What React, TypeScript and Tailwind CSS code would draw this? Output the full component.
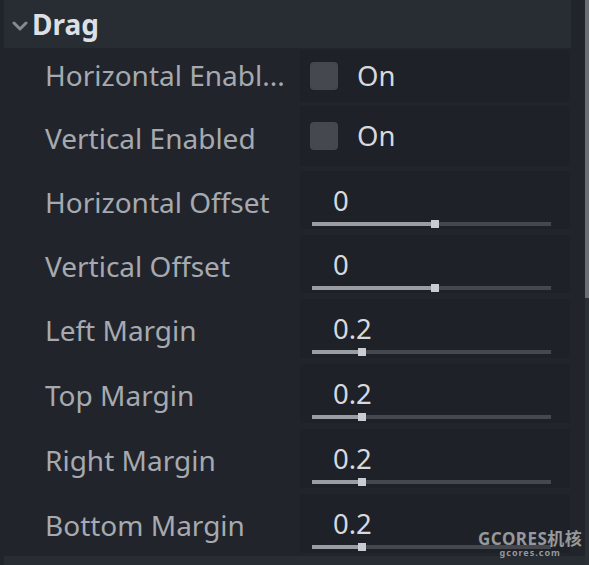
const font = { fontFamily: '"Noto Sans", "Noto Sans CJK SC", sans-serif' };

type Row =
  | { label: string; kind: 'check'; height: string }
  | { label: string; kind: 'slider'; value: string; ratio: number; height: string };

const rows: Row[] = [
  { label: 'Horizontal Enabl...', kind: 'check', height: 'h-[56px]' },
  { label: 'Vertical Enabled', kind: 'check', height: 'h-[64px]' },
  { label: 'Horizontal Offset', kind: 'slider', value: '0', ratio: 0.515, height: 'h-[64px]' },
  { label: 'Vertical Offset', kind: 'slider', value: '0', ratio: 0.515, height: 'h-[64px]' },
  { label: 'Left Margin', kind: 'slider', value: '0.2', ratio: 0.21, height: 'h-[65px]' },
  { label: 'Top Margin', kind: 'slider', value: '0.2', ratio: 0.21, height: 'h-[65px]' },
  { label: 'Right Margin', kind: 'slider', value: '0.2', ratio: 0.21, height: 'h-[65px]' },
  { label: 'Bottom Margin', kind: 'slider', value: '0.2', ratio: 0.21, height: 'h-[65px]' },
];

function Slider({ ratio }: { ratio: number }) {
  return (
    <div className="relative ml-[12px] h-[4px] w-[239px] bg-[#45484e]">
      <div className="h-full bg-[#9a9da2]" style={{ width: `${ratio * 100}%` }} />
      <div
        className="absolute top-[-2px] h-[8px] w-[8px] -translate-x-1/2 bg-[#c9ccd0]"
        style={{ left: `${ratio * 100}%` }}
      />
    </div>
  );
}

export default function App() {
  return (
    <div className="flex h-[565px] w-[589px] overflow-hidden bg-[#21252b]" style={font}>
      <div className="relative flex w-[585px] flex-col">
        <div className="ml-[4px] flex h-[48px] w-[567px] items-center bg-[#282c33]">
          <svg width="16" height="10" viewBox="0 0 16 10" className="ml-[8px] mt-[4px]">
            <path d="M2 2 L8 8 L14 2" fill="none" stroke="#868a90" strokeWidth="3" strokeLinecap="round" strokeLinejoin="round" />
          </svg>
          <span className="ml-[4px] text-[28px] font-bold leading-none text-[#dcdfe3]">Drag</span>
        </div>

        {rows.map((row, i) => (
          <div key={row.label} className={`flex ${row.height}`}>
            <div
              className={`flex w-[300px] items-center whitespace-nowrap pl-[45px] text-[28px] leading-[30px] text-[#a6aab0] ${i > 0 ? 'pt-[3px]' : 'pb-[3px]'}`}
            >
              {row.label}
            </div>
            {row.kind === 'check' ? (
              <div className="my-[2px] flex w-[270px] items-center bg-[#1e2127]">
                <div className="ml-[10px] h-[28px] w-[28px] rounded-[4px] bg-[#45484e]" />
                <span className="ml-[19px] text-[27.5px] leading-[30px] text-[#d6d9dd]">On</span>
              </div>
            ) : (
              <div className="my-[3px] flex w-[270px] flex-col bg-[#1e2127]">
                <span className="ml-[33px] mt-[15px] text-[27.5px] leading-[30px] text-[#d6d9dd]">
                  {row.value}
                </span>
                <div className="mt-[6px]">
                  <Slider ratio={row.ratio} />
                </div>
              </div>
            )}
          </div>
        ))}

        <div className="ml-[4px] flex-1 bg-[#282c33]" />

        <div className="pointer-events-none absolute left-[478px] top-[532px] flex flex-col items-center text-[#b4b6b9] opacity-80">
          <span className="text-[17px] font-bold leading-[14px] tracking-[0.5px]">GCORES机核</span>
          <span className="mt-[3px] text-[9px] font-bold leading-[8px] tracking-[1px]">gcores.com</span>
        </div>
      </div>
      <div className="flex w-[4px] flex-col">
        <div className="h-[298px] bg-[#6a6e74]" />
        <div className="flex-1 bg-[#2b2f36]" />
      </div>
    </div>
  );
}
